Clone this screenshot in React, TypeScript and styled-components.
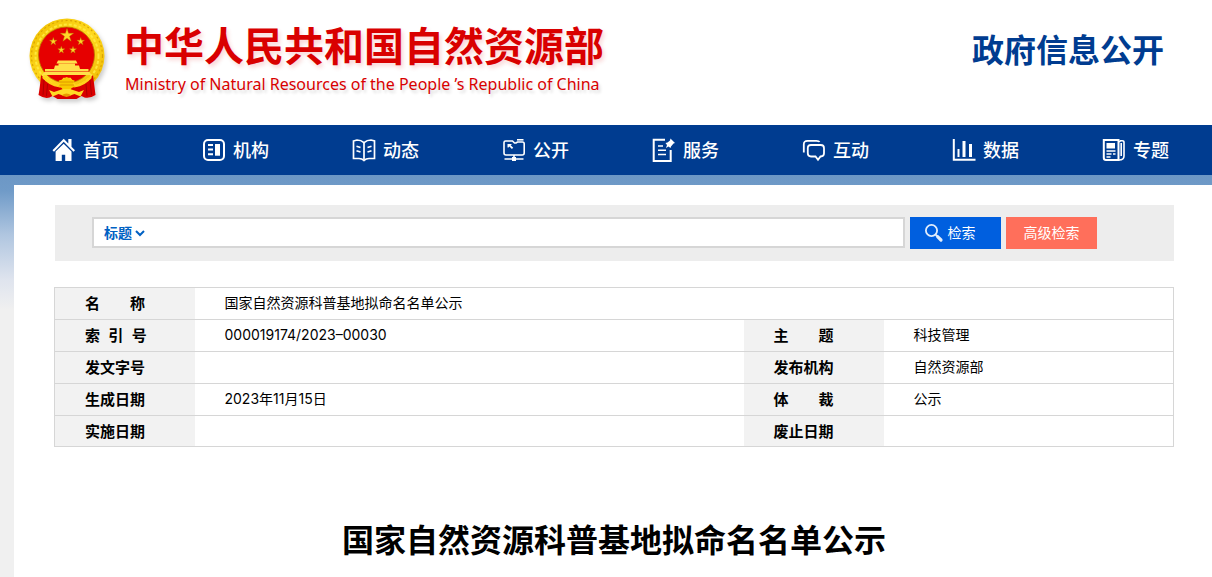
import React from 'react';
import styled, { createGlobalStyle, css } from 'styled-components';

const GlobalStyle = createGlobalStyle`
  *, *::before, *::after { box-sizing: border-box; }
  html, body { margin: 0; background: #f0f0f0; }
  body {
    font-family: Inter, "Noto Sans CJK SC", sans-serif;
    font-size: 14px;
    color: #000;
  }
  button, input, select { font: inherit; }
`;

const cjk = '"Noto Sans CJK SC", sans-serif';

const Masthead = styled.header`
  display: flex;
  justify-content: space-between;
  align-items: flex-start;
  height: 125px;
  padding: 16px 48px 0 28px;
  background: #fff;
`;

const Brand = styled.a`
  display: flex;
  gap: 16px;
  color: #d90000;
  text-decoration: none;
`;

const EmblemArt = styled.svg`
  width: 80px;
  height: 88px;
  flex: none;
  filter: drop-shadow(2px 3px 2px rgba(0, 0, 0, 0.2));
`;

const BrandText = styled.span`
  display: flex;
  flex-direction: column;
  white-space: nowrap;
`;

const BrandName = styled.span`
  font: 700 40px/56px ${cjk};
  text-shadow: 2px 3px 4px rgba(217, 0, 0, 0.16);
`;

const BrandEnglish = styled.span`
  padding-left: 1px;
  font: 400 16px/24px "Noto Sans", sans-serif;
  text-shadow: 2px 3px 3px rgba(0, 0, 0, 0.14);
`;

const SectionName = styled.p`
  margin: 8px 0 0;
  font: 700 32px/48px ${cjk};
  color: #003c90;
  white-space: nowrap;
`;

const Nav = styled.nav`
  padding-right: 12px;
  background: #003c90;
`;

const NavList = styled.ul`
  display: grid;
  grid-template-columns: repeat(8, 1fr);
  margin: 0;
  padding: 0;
  list-style: none;
`;

const NavLink = styled.a`
  display: flex;
  align-items: center;
  gap: 7px;
  height: 50px;
  padding-left: 52px;
  color: #fff;
  font: 500 18px/26px ${cjk};
  text-decoration: none;
  white-space: nowrap;
`;

const NavLabel = styled.span`
  padding-bottom: 2px;
`;

const NavIcon = styled.svg`
  width: 24px;
  height: 24px;
  flex: none;
  fill: none;
  stroke: #fff;
  stroke-width: 2;
`;

const Backdrop = styled.div`
  padding: 10px 0 0 14px;
  background: #f0f0f0 linear-gradient(#6c97c5 0, #709bc8 16px, #b0c6e0 60px, #dfe4ee 105px, #f0f0f0 135px) no-repeat;
`;

const Main = styled.main`
  min-height: calc(100vh - 185px);
  padding: 20px 38px 16px 40px;
  background: #fff;
`;

const SearchBar = styled.form`
  display: flex;
  align-items: flex-start;
  gap: 5px;
  height: 56px;
  margin-left: 1px;
  padding: 12px 77px 0 37px;
  background: #ededed;
`;

const SearchBox = styled.div`
  display: flex;
  flex: 1;
  height: 31px;
  padding-left: 10px;
  border: 2px solid #d6d6d6;
  background: #fff;
`;

const FieldPicker = styled.span`
  display: grid;
  grid-template-columns: 31px 10px;
  align-items: center;
`;

const FieldSelect = styled.select`
  grid-area: 1 / 1 / 2 / 3;
  width: 100%;
  height: 27px;
  padding: 0 0 2px;
  appearance: none;
  border: 0;
  background: transparent;
  color: #0061c3;
  font: 700 14px/20px ${cjk};
`;

const FieldChevron = styled.svg`
  grid-area: 1 / 2;
  width: 10px;
  height: 10px;
  fill: none;
  stroke: #0061c3;
  stroke-width: 2;
  pointer-events: none;
`;

const Keyword = styled.input`
  flex: 1;
  min-width: 0;
  padding: 0 8px;
  border: 0;
  background: transparent;
`;

const SearchButton = styled.button<{ $accent?: boolean }>`
  display: flex;
  align-items: center;
  justify-content: center;
  gap: 4px;
  width: 91px;
  height: 32px;
  padding: 0 12px 0 0;
  border: 0;
  background: #005fdf;
  color: #fff;
  font: 400 14px/20px ${cjk};
  ${(p) =>
    p.$accent &&
    css`
      padding: 0;
      background: #ff6f5b;
    `}
`;

const ButtonLabel = styled.span`
  padding-bottom: 2px;
`;

const LensIcon = styled.svg`
  width: 20px;
  height: 20px;
  fill: none;
  stroke: #e2edfb;
`;

const InfoTable = styled.table`
  width: 100%;
  margin-top: 26px;
  border-collapse: collapse;
  border: 1px solid #d6d6d6;
  table-layout: fixed;
`;

const LabelColumn = styled.col`
  width: 140px;
`;

const WideColumn = styled.col`
  width: 549px;
`;

const InfoRow = styled.tr`
  height: 32px;
  border-bottom: 1px solid #d6d6d6;

  &:last-child {
    height: 31px;
  }
`;

const Label = styled.th`
  padding: 1px 0 0 30px;
  background: #f2f2f2;
  font: 700 15px/22px "Liberation Sans", ${cjk};
  text-align: left;
  white-space: pre;
`;

const Value = styled.td`
  padding: 0 0 1px 30px;
  line-height: 22px;
`;

const Headline = styled.h1`
  margin: 67px 0 0;
  font: 700 32px/48px ${cjk};
  text-align: center;
`;

const star = (cx: number, cy: number, r: number) =>
  Array.from({ length: 10 }, (_, i) => {
    const a = (Math.PI * i) / 5 - Math.PI / 2;
    const d = i % 2 ? r * 0.38 : r;
    return `${(cx + d * Math.cos(a)).toFixed(2)},${(cy + d * Math.sin(a)).toFixed(2)}`;
  }).join(' ');

function Emblem() {
  return (
    <EmblemArt viewBox="28 16 80 88" aria-hidden="true">
      <defs>
        <linearGradient id="gold" x1="0" y1="0" x2="1" y2="1">
          <stop offset="0" stopColor="#efbf00" />
          <stop offset="0.5" stopColor="#ffd91f" />
          <stop offset="1" stopColor="#eeb600" />
        </linearGradient>
      </defs>
      <circle cx="67" cy="56" r="37.5" fill="url(#gold)" />
      <circle cx="67" cy="56" r="35.5" fill="none" stroke="#d9a400" strokeWidth="1.2" strokeDasharray="2 2.6" />
      <circle cx="67" cy="56" r="31.5" fill="none" stroke="#ffe83a" strokeWidth="2" strokeDasharray="3 2" />
      <circle cx="66.5" cy="55" r="28" fill="#e60000" stroke="#b97800" strokeWidth="0.8" />
      <g fill="#ffd629" stroke="#b97b00" strokeWidth="0.4">
        <polygon points={star(67, 35.5, 7)} />
        <polygon points={star(53.3, 41.5, 4)} />
        <polygon points={star(80.7, 41.5, 4)} />
        <polygon points={star(61.3, 50, 3.7)} />
        <polygon points={star(73, 50, 3.7)} />
      </g>
      <g fill="#ffe14a">
        <path d="M58 60.5h18l1.5 3h-21z" />
        <path d="M58.5 63.500h16.500v2.500H58.500zM55 65.500h24l1 3.500H54z" />
        <path d="M45 69h43.500v2.500H45zM44.500 72h45l2 3H42z" />
      </g>
      <path d="M41 75q-1 12-2.500 20 6 4 11 2.500l3-1.500 5 3h19l5-3 3 1.500q6 1 11-2.500l-2.500-20q-8 10-19 12H60q-11-3-19-12z" fill="#d90000" />
      <path d="M43 77q7 8 16 9l5-7h6l5 7q9-1 16-9" fill="none" stroke="#ffd21c" strokeWidth="2.6" />
      <path d="M66.700 77l4 2.500 4 1-2 4 3 2-4 1.500-2 3h-6l-2-3-4-1.500 3-2-2-4 4-1z" fill="#f9c900" />
      <path d="M60 82h13.500M59.500 85h14.500" stroke="#dc8d00" strokeWidth="0.8" />
      <path d="M49 90l5 2 6-2 3-1h7l3 1 6 2 5-2-3.500 6.500-6-2.500-6 2h-4l-6-2-6 2.500z" fill="#ffdc25" />
      <path d="M61.500 95.500q5-4 10 0l-5 1.500z" fill="#e99b00" />
      <path d="M44 80l-1 15M47.500 84l-1 12M90 80l1.500 15M86 84l1 12" stroke="#a80000" strokeWidth="0.9" />
    </EmblemArt>
  );
}

const navItems: { label: string; icon: React.ReactNode }[] = [
  {
    label: '首页',
    icon: (
      <g stroke="none" fill="#fff">
        <path d="M0.500 12.200 11.700 0.800l4.600 4.600V1h3.200v7.700l3.500 3.500-1.500 1.500-9.800-9.900-9.700 9.900z" />
        <path d="M11.700 5.800 19.500 13.600V23H13.200v-6.300H9.800V23H3.600V13.600z" />
      </g>
    ),
  },
  {
    label: '机构',
    icon: (
      <>
        <rect x="2" y="2" width="20" height="20" rx="4" />
        <path d="M6 7h5M6 11.500h5M6 16.200h5" />
        <path d="M13 6h5v11.700h-5z" fill="#fff" stroke="none" />
      </>
    ),
  },
  {
    label: '动态',
    icon: (
      <g strokeWidth="1.7">
        <path d="M1.500 3 5 2q4 0 7 2.700Q15 2 19 2l3.500 1v17.500H17q-3 0-5 2-2-2-5-2H1.500z" />
        <path d="M12 4.700v17M4.500 8.200l4 1.300M4.500 12.700l4 1.300M19.500 8.200l-4 1.300M19.500 12.700l-4 1.300" />
      </g>
    ),
  },
  {
    label: '公开',
    icon: (
      <g strokeWidth="1.6">
        <path d="M3.500 3H10.500L12.500 5H14L15.500 4H20.500Q22.200 4 22.200 5.700V15Q22.200 17 20.200 17H4Q2 17 2 15V4.500Q2 3 3.500 3z" />
        <path d="M15 1.800h6.500" />
        <path d="M5.500 6h4.500l-1.300 1.300 2.500 2.400-1.300 1.300-2.500-2.500-1.300 1.300-.6-.6z" fill="#fff" stroke="none" />
        <path d="M12 17v2M2.500 21h19" />
        <path d="M10 19h4v4h-4z" fill="#fff" stroke="none" />
      </g>
    ),
  },
  {
    label: '服务',
    icon: (
      <>
        <path d="M13 1.800H1.700V23h17V12" />
        <path d="M6 8h5M6 12.200h8M6 16.500h8" strokeWidth="1.6" />
        <path d="M18.500 0.500 23 5l-1.500 0.500L19 8.500 18.500 10l-2-1.500L14 10l1-3-1.500-2 2-.5 2.500-2z" fill="#fff" stroke="none" />
      </>
    ),
  },
  {
    label: '互动',
    icon: (
      <g strokeWidth="1.8">
        <path d="M1.800 14.500V6.500q0-3.700 3.700-3.700h9q2.500 0 3 1.200" />
        <path d="M9 7h9.800q3.200 0 3.200 3.200v5.100q0 3.200-3.200 3.200h-.3l-2.500 3.300-2.500-3.300H9q-3.200 0-3.200-3.200v-5.100Q5.800 7 9 7z" />
      </g>
    ),
  },
  {
    label: '数据',
    icon: (
      <>
        <path d="M1.800 1v20.800H23.500" />
        <path d="M6.500 11v8" />
        <path d="M12 3v16M18.500 6v13" strokeWidth="3" />
      </>
    ),
  },
  {
    label: '专题',
    icon: (
      <>
        <path d="M1.800 2h14.700v20H4q-2.200 0-2.200-2.200z" />
        <path d="M4.500 5h8.500v5.500H4.500z" fill="#fff" stroke="none" />
        <path d="M4.500 13h9M4.500 16h5M11 16h2.500M4.500 19h4" strokeWidth="1.4" />
        <path d="M17 4l1.500-1.200h1.700q1.800 0 1.800 1.600V18q0 4-5 4M19.200 5v13" strokeWidth="1.6" />
      </>
    ),
  },
];

export default function App() {
  return (
    <>
      <GlobalStyle />
      <Masthead>
        <Brand href="#">
          <Emblem />
          <BrandText>
            <BrandName>中华人民共和国自然资源部</BrandName>
            <BrandEnglish>Ministry of Natural Resources of the People ’s Republic of China</BrandEnglish>
          </BrandText>
        </Brand>
        <SectionName>政府信息公开</SectionName>
      </Masthead>
      <Nav>
        <NavList>
          {navItems.map((item) => (
            <li key={item.label}>
              <NavLink href="#">
                <NavIcon viewBox="0 0 24 24" aria-hidden="true">{item.icon}</NavIcon>
                <NavLabel>{item.label}</NavLabel>
              </NavLink>
            </li>
          ))}
        </NavList>
      </Nav>
      <Backdrop>
        <Main>
          <SearchBar onSubmit={(e) => e.preventDefault()}>
            <SearchBox>
              <FieldPicker>
                <FieldSelect aria-label="检索字段">
                  <option>标题</option>
                </FieldSelect>
                <FieldChevron viewBox="0 0 10 10" aria-hidden="true">
                  <path d="M1 3l4 4 4-4" />
                </FieldChevron>
              </FieldPicker>
              <Keyword type="text" aria-label="检索词" />
            </SearchBox>
            <SearchButton type="submit">
              <LensIcon viewBox="0 0 20 20" aria-hidden="true">
                <circle cx="7.5" cy="7.5" r="5.6" strokeWidth="1.8" />
                <path d="M11.700 11.700l2 2" strokeWidth="2" />
                <path d="M13.800 13.800l3.200 3.200" strokeWidth="3.2" strokeLinecap="round" />
              </LensIcon>
              <ButtonLabel>检索</ButtonLabel>
            </SearchButton>
            <SearchButton type="button" $accent>
              <ButtonLabel>高级检索</ButtonLabel>
            </SearchButton>
          </SearchBar>
          <InfoTable>
            <colgroup>
              <LabelColumn />
              <WideColumn />
              <LabelColumn />
              <col />
            </colgroup>
            <tbody>
              <InfoRow>
                <Label scope="row">名{'\u3000\u3000'}称</Label>
                <Value colSpan={3}>国家自然资源科普基地拟命名名单公示</Value>
              </InfoRow>
              <InfoRow>
                <Label scope="row">{'索  引  号'}</Label>
                <Value>000019174/2023–00030</Value>
                <Label scope="row">主{'\u3000\u3000'}题</Label>
                <Value>科技管理</Value>
              </InfoRow>
              <InfoRow>
                <Label scope="row">发文字号</Label>
                <Value />
                <Label scope="row">发布机构</Label>
                <Value>自然资源部</Value>
              </InfoRow>
              <InfoRow>
                <Label scope="row">生成日期</Label>
                <Value>2023年11月15日</Value>
                <Label scope="row">体{'\u3000\u3000'}裁</Label>
                <Value>公示</Value>
              </InfoRow>
              <InfoRow>
                <Label scope="row">实施日期</Label>
                <Value />
                <Label scope="row">废止日期</Label>
                <Value />
              </InfoRow>
            </tbody>
          </InfoTable>
          <Headline>国家自然资源科普基地拟命名名单公示</Headline>
        </Main>
      </Backdrop>
    </>
  );
}
